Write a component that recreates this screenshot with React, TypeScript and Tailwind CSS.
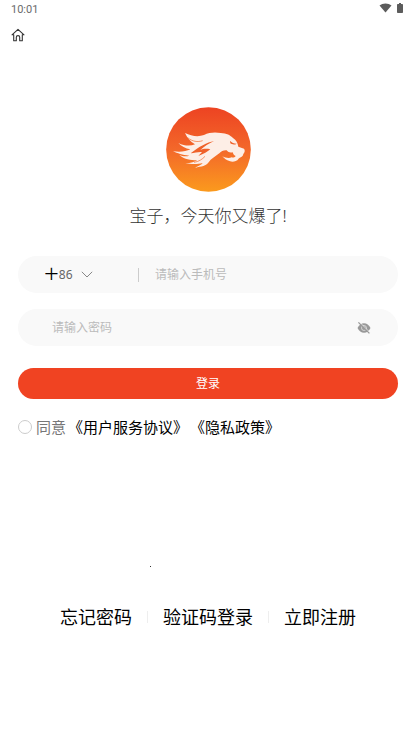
import { useState } from "react"
import { MdVisibility } from "react-icons/md"

function StatusBar() {
  return (
    <div className="flex h-5 items-center justify-between px-[11px] font-[Roboto,sans-serif] text-[11px] leading-5 text-[#6b6b6b]">
      <span>10:01</span>
      <div className="flex items-center gap-[5px] pb-1 text-[#5c5c5c]">
        <svg viewBox="0 0 13 10" className="h-[10px] w-[13px]" fill="currentColor">
          <path d="M6.5 9.6 0.5 2.6C2.2 1.1 4.2 0.4 6.5 0.4s4.3 0.7 6 2.2z" />
        </svg>
        <svg viewBox="0 0 6 10" className="h-[10px] w-[6px]" fill="currentColor">
          <path d="M2 0h2v1h1.2c.5 0 .8.3.8.8v7.400c0 .5-.3.8-.8.8H.8C.3 10 0 9.700 0 9.200V1.800C0 1.300.3 1 .8 1H2z" />
        </svg>
      </div>
    </div>
  )
}

function HomeIcon() {
  return (
    <svg
      viewBox="0 0 14 14"
      className="h-[14px] w-[14px]"
      fill="none"
      stroke="currentColor"
      strokeWidth="1.1"
      strokeLinejoin="round"
      strokeLinecap="round"
    >
      <path d="M1 6.800 7 1.300l6 5.500H11.300V12.800H8.700V9.300a1.700 1.700 0 0 0-3.400 0v3.500H2.700V6.800z" />
    </svg>
  )
}

function EyeOffIcon() {
  return (
    <svg viewBox="0 0 14 14" className="size-[14px]">
      <path
        d="M0.500 7C2 4 4.300 2.300 7 2.300S12 4 13.500 7C12 10 9.700 11.700 7 11.700S2 10 0.500 7z"
        fill="currentColor"
      />
      <circle cx="7" cy="7" r="2.500" fill="none" stroke="#f9f9f9" strokeWidth="0.6" />
      <path d="M2.300 0.900 13 11.600" stroke="#f9f9f9" strokeWidth="0.8" />
      <path d="M1.400 1.400 12.400 12.400" stroke="currentColor" strokeWidth="1.3" />
    </svg>
  )
}

function Logo() {
  return (
    <svg viewBox="0 0 255 255" className="size-[85px]" role="img" aria-label="logo">
      <defs>
        <linearGradient id="logo-bg" x1="0" y1="0" x2="0" y2="1">
          <stop offset="0" stopColor="#ed4322" />
          <stop offset="0.5" stopColor="#f3682a" />
          <stop offset="1" stopColor="#fb9a1d" />
        </linearGradient>
      </defs>
      <circle cx="127.500" cy="127.500" r="127" fill="url(#logo-bg)" />
      <path
        fill="#fdeee6"
        d="M57 78C76 88 98 90 114 84C130 76 147 75 164 78C182 79 193 85 201 93C211 100 215 108 217 119L234 125C238 130 236 136 232 141C231 149 224 151 219 154L214 160C206 165 198 165 190 162C182 160 175 155 169 148C178 153 190 155 197 151C201 153 206 151 209 147C203 145 202 141 200 136C192 138 187 136 182 130C173 129 166 133 160 139C148 148 134 156 128 166C120 177 108 179 86 182C98 177 107 173 110 168C93 173 73 171 58 169C75 168 87 164 94 159C74 162 50 154 40 144C50 149 62 149 70 146C48 144 35 139 21 133C42 136 60 134 73 127C58 125 46 117 37 108C55 117 73 118 87 112C72 104 63 91 57 78Z"
      />
      <path
        fill="#ef6129"
        d="M144 102C123 106 99 119 74 139C86 137 98 134 108 135L97 147C114 141 124 134 133 127C120 124 110 126 103 129C114 118 129 110 144 102ZM192 101C197 107 204 110 212 110C206 114 198 113 193 109Z"
      />
      <path fill="none" stroke="#f3682a" strokeWidth="2" d="M65 92c14 12 30 14 45 9M84 166c14-2 25-9 33-18" />
    </svg>
  )
}

function PhoneField() {
  return (
    <div className="flex h-[37px] items-center rounded-full bg-[#f9f9f9]">
      <div className="flex w-[120px] items-center pl-[26px]">
        <label htmlFor="area" className="pb-1 text-[26px] leading-6 font-light text-black">
          +
        </label>
        <select
          id="area"
          aria-label="区号"
          className="w-[22px] appearance-none bg-transparent text-xs text-[#666] outline-none"
        >
          <option>86</option>
        </select>
        <svg
          viewBox="0 0 12 7"
          className="pointer-events-none h-[7px] w-3"
          fill="none"
          stroke="#888"
          strokeWidth="1"
        >
          <path d="M0.800 0.800 6 6l5.200-5.200" />
        </svg>
      </div>
      <div className="h-[14px] w-px bg-[#ccc]" />
      <input
        type="tel"
        aria-label="手机号"
        placeholder="请输入手机号"
        className="ml-4 min-w-0 flex-1 bg-transparent pr-6 text-xs outline-none placeholder:text-[#bbb]"
      />
    </div>
  )
}

function PasswordField() {
  const [visible, setVisible] = useState(false)

  return (
    <div className="flex h-[37px] items-center rounded-full bg-[#f9f9f9] pr-[27px] pl-[34px]">
      <input
        type={visible ? "text" : "password"}
        aria-label="密码"
        placeholder="请输入密码"
        className="min-w-0 flex-1 bg-transparent text-xs outline-none placeholder:text-[#bbb]"
      />
      <button
        type="button"
        aria-label="显示密码"
        onClick={() => setVisible(!visible)}
        className="text-[#999]"
      >
        {visible ? <MdVisibility size={14} /> : <EyeOffIcon />}
      </button>
    </div>
  )
}

export default function App() {
  return (
    <div className="min-h-screen bg-white font-['Noto_Sans','Noto_Sans_CJK_SC',sans-serif]">
      <StatusBar />
      <header className="px-[11px] pt-2">
        <a href="#home" aria-label="首页" className="block w-[14px] text-[#333]">
          <HomeIcon />
        </a>
      </header>

      <main className="pt-[65px] pr-4 pl-[18px]">
        <div className="flex flex-col items-center">
          <Logo />
          <h1 className="mt-3 text-[17px] leading-6 font-light text-[#333]">宝子，今天你又爆了!</h1>
        </div>

        <form className="mt-[28px]" onSubmit={(e) => e.preventDefault()}>
          <PhoneField />
          <div className="mt-4">
            <PasswordField />
          </div>
          <button
            type="submit"
            className="mt-[22px] block h-[31px] w-full rounded-full bg-[#f04322] text-xs text-white"
          >
            登录
          </button>
          <div className="mt-4 flex items-center gap-0.5 text-[15px] leading-6 text-black">
            <input
              id="agree"
              type="checkbox"
              className="mr-0.5 size-[14px] appearance-none rounded-full border border-[#ccc] checked:border-[#f04322] checked:bg-[#f04322]"
            />
            <label htmlFor="agree" className="text-[#777]">
              同意
            </label>
            <a href="#terms">《用户服务协议》</a>
            <a href="#privacy">《隐私政策》</a>
          </div>
        </form>

        <div className="mt-[127px] ml-[132px] size-px bg-[#333]" />

        <nav className="mt-[36px] flex items-center justify-center gap-[15px] text-lg leading-7 text-black">
          <a href="#forgot">忘记密码</a>
          <span className="h-3 w-px bg-[#eee]" />
          <a href="#code">验证码登录</a>
          <span className="h-3 w-px bg-[#eee]" />
          <a href="#register">立即注册</a>
        </nav>
      </main>
    </div>
  )
}
